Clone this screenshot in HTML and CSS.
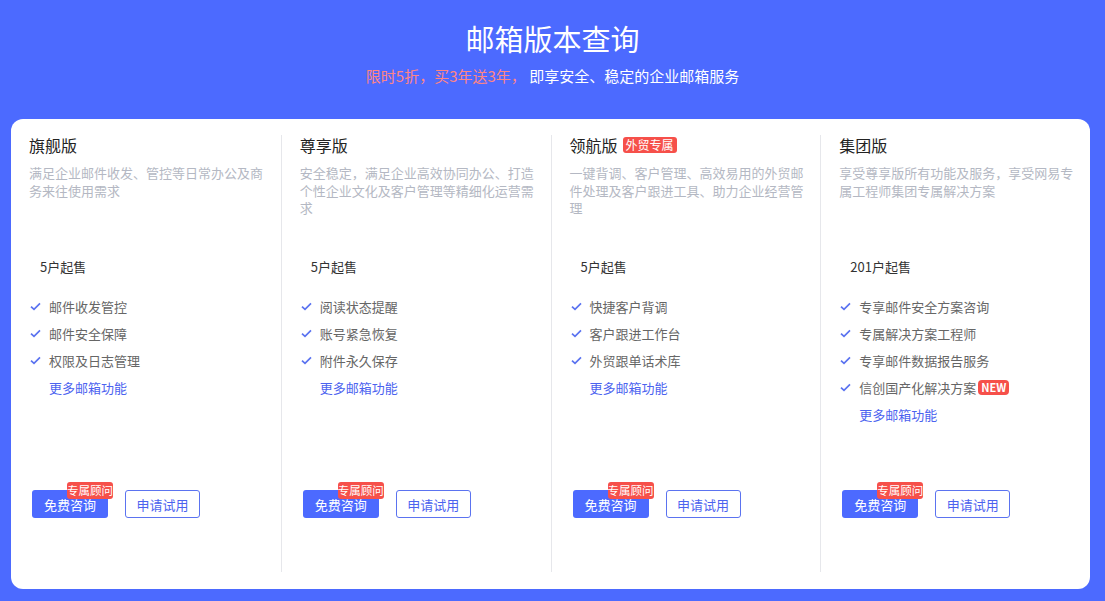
FILE: index.html
```html
<!DOCTYPE html>
<html lang="zh-CN">
<head>
    <meta charset="UTF-8">
    <meta name="viewport" content="width=device-width, initial-scale=1.0">
    <title>邮箱版本查询</title>
    <link rel="stylesheet" href="styles.css">
</head>
<body>

<div class="header">
    <h1>邮箱版本查询</h1>
    <p class="subtitle"><span class="promo">限时5折，买3年送3年，</span> 即享安全、稳定的企业邮箱服务</p>
</div>

<div class="card">
    <!-- 旗舰版 -->
    <div class="plan">
        <h3 class="plan-title">旗舰版</h3>
        <p class="plan-desc">满足企业邮件收发、管控等日常办公及商务来往使用需求</p>
        <div class="plan-price">5户起售</div>
        <ul class="features">
            <li><svg class="check" viewBox="0 0 11 9"><path d="M1 4.6 L4 7.4 L10 1.4"/></svg>邮件收发管控</li>
            <li><svg class="check" viewBox="0 0 11 9"><path d="M1 4.6 L4 7.4 L10 1.4"/></svg>邮件安全保障</li>
            <li><svg class="check" viewBox="0 0 11 9"><path d="M1 4.6 L4 7.4 L10 1.4"/></svg>权限及日志管理</li>
            <li class="more"><a href="#">更多邮箱功能</a></li>
        </ul>
        <div class="actions">
            <button class="btn btn-primary">免费咨询<span class="tip">专属顾问</span></button>
            <button class="btn btn-outline">申请试用</button>
        </div>
    </div>

    <!-- 尊享版 -->
    <div class="plan">
        <h3 class="plan-title">尊享版</h3>
        <p class="plan-desc">安全稳定，满足企业高效协同办公、打造个性企业文化及客户管理等精细化运营需求</p>
        <div class="plan-price">5户起售</div>
        <ul class="features">
            <li><svg class="check" viewBox="0 0 11 9"><path d="M1 4.6 L4 7.4 L10 1.4"/></svg>阅读状态提醒</li>
            <li><svg class="check" viewBox="0 0 11 9"><path d="M1 4.6 L4 7.4 L10 1.4"/></svg>账号紧急恢复</li>
            <li><svg class="check" viewBox="0 0 11 9"><path d="M1 4.6 L4 7.4 L10 1.4"/></svg>附件永久保存</li>
            <li class="more"><a href="#">更多邮箱功能</a></li>
        </ul>
        <div class="actions">
            <button class="btn btn-primary">免费咨询<span class="tip">专属顾问</span></button>
            <button class="btn btn-outline">申请试用</button>
        </div>
    </div>

    <!-- 领航版 -->
    <div class="plan">
        <h3 class="plan-title">领航版<span class="tag">外贸专属</span></h3>
        <p class="plan-desc">一键背调、客户管理、高效易用的外贸邮件处理及客户跟进工具、助力企业经营管理</p>
        <div class="plan-price">5户起售</div>
        <ul class="features">
            <li><svg class="check" viewBox="0 0 11 9"><path d="M1 4.6 L4 7.4 L10 1.4"/></svg>快捷客户背调</li>
            <li><svg class="check" viewBox="0 0 11 9"><path d="M1 4.6 L4 7.4 L10 1.4"/></svg>客户跟进工作台</li>
            <li><svg class="check" viewBox="0 0 11 9"><path d="M1 4.6 L4 7.4 L10 1.4"/></svg>外贸跟单话术库</li>
            <li class="more"><a href="#">更多邮箱功能</a></li>
        </ul>
        <div class="actions">
            <button class="btn btn-primary">免费咨询<span class="tip">专属顾问</span></button>
            <button class="btn btn-outline">申请试用</button>
        </div>
    </div>

    <!-- 集团版 -->
    <div class="plan">
        <h3 class="plan-title">集团版</h3>
        <p class="plan-desc">享受尊享版所有功能及服务，享受网易专属工程师集团专属解决方案</p>
        <div class="plan-price">201户起售</div>
        <ul class="features">
            <li><svg class="check" viewBox="0 0 11 9"><path d="M1 4.6 L4 7.4 L10 1.4"/></svg>专享邮件安全方案咨询</li>
            <li><svg class="check" viewBox="0 0 11 9"><path d="M1 4.6 L4 7.4 L10 1.4"/></svg>专属解决方案工程师</li>
            <li><svg class="check" viewBox="0 0 11 9"><path d="M1 4.6 L4 7.4 L10 1.4"/></svg>专享邮件数据报告服务</li>
            <li><svg class="check" viewBox="0 0 11 9"><path d="M1 4.6 L4 7.4 L10 1.4"/></svg>信创国产化解决方案<span class="new">NEW</span></li>
            <li class="more"><a href="#">更多邮箱功能</a></li>
        </ul>
        <div class="actions">
            <button class="btn btn-primary">免费咨询<span class="tip">专属顾问</span></button>
            <button class="btn btn-outline">申请试用</button>
        </div>
    </div>
</div>

</body>
</html>
```

FILE: styles.css
```css
/* Page */
body {
    margin: 0;
    padding: 18px 0 0;
    background-color: #4c6aff;
    font-family: "Noto Sans CJK SC", "Noto Sans", sans-serif;
    color: #333;
    height: 583px;
    overflow: hidden;
}

/* Header */
.header {
    text-align: center;
    color: #fff;
}

.header h1 {
    margin: 0;
    font-size: 29px;
    line-height: 40px;
    font-weight: 400;
}

.subtitle {
    margin: 8px 0 0;
    font-size: 15px;
    line-height: 20px;
}

.promo {
    color: #ff8585;
}

/* Card with the four plans */
.card {
    margin: 33px 0 0 11px;
    width: 1079px;
    height: 470px;
    box-sizing: border-box;
    padding: 16px 0 17px;
    background-color: #fff;
    border-radius: 12px;
    display: grid;
    grid-template-columns: repeat(4, 1fr);
}

.plan {
    display: flex;
    flex-direction: column;
    padding: 0 16px 54px 18px;
    border-left: 1px solid #e6e7eb;
}

.plan:first-child {
    border-left: none;
}

.plan-title {
    margin: 0;
    font-size: 16px;
    line-height: 20px;
    font-weight: 400;
    color: #222;
    display: flex;
    align-items: center;
}

.tag {
    margin-left: 5px;
    padding: 0 3px;
    background-color: #f6504a;
    color: #fff;
    font-size: 12px;
    line-height: 16px;
    border-radius: 3px;
}

.plan-desc {
    margin: 9px 0 0;
    height: 93px;
    font-size: 13px;
    line-height: 17.5px;
    color: #b4b8c3;
}

.plan-price {
    padding-left: 11px;
    font-size: 13px;
    line-height: 20px;
    color: #333;
}

/* Feature list */
.features {
    list-style: none;
    margin: 16px 0 0;
    padding: 0;
}

.features li {
    display: flex;
    align-items: center;
    font-size: 13px;
    line-height: 27px;
    color: #666;
}

.check {
    width: 11px;
    height: 9px;
    margin: 0 8px 0 1px;
    fill: none;
    stroke: #5b73f0;
    stroke-width: 1.7;
}

.features .more {
    padding-left: 20px;
}

.more a {
    color: #4c63ef;
    text-decoration: none;
}

.new {
    margin-left: 2px;
    padding: 0 3px;
    background-color: #f6504a;
    color: #fff;
    font-size: 11px;
    font-weight: bold;
    line-height: 15px;
    border-radius: 4px;
}

/* Buttons */
.actions {
    margin-top: auto;
    display: flex;
    gap: 17px;
    padding-left: 3px;
}

.btn {
    position: relative;
    height: 28px;
    padding: 0;
    font-family: inherit;
    font-size: 13px;
    border-radius: 3px;
    cursor: pointer;
}

.btn-primary {
    width: 76px;
    background-color: #4c6aff;
    color: #fff;
    border: none;
}

.btn-outline {
    width: 75px;
    background-color: #fff;
    color: #4c63ef;
    border: 1px solid #5b73f0;
}

.tip {
    position: absolute;
    top: -8px;
    right: -5px;
    width: 46px;
    height: 17px;
    line-height: 17px;
    background-color: #f6504a;
    color: #fff;
    font-size: 11.5px;
    border-radius: 3px;
    text-align: center;
}
```
